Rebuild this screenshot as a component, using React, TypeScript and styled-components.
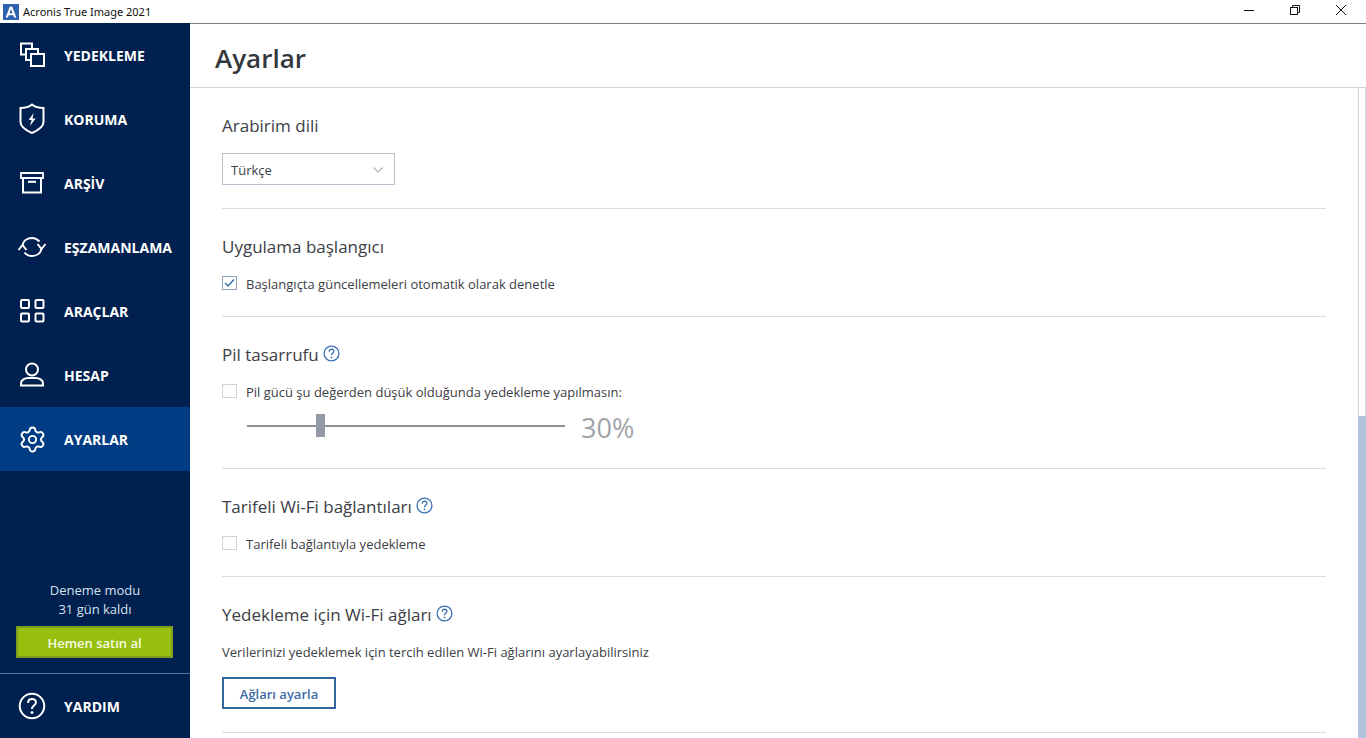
import React from 'react'
import styled, { createGlobalStyle } from 'styled-components'
import { Settings } from 'lucide-react'

const GlobalStyle = createGlobalStyle`
  html, body {
    margin: 0;
    height: 100%;
    overflow: hidden;
    background: #fff;
  }
  #root {
    height: 100%;
  }
  * {
    box-sizing: border-box;
  }
`

const Window = styled.div`
  display: flex;
  flex-direction: column;
  width: 1366px;
  height: 738px;
  overflow: hidden;
  font-family: 'Open Sans', 'Liberation Sans', sans-serif;
  color: #3b4046;
`

const TitleBar = styled.div`
  display: flex;
  align-items: center;
  flex: 0 0 23px;
  padding-left: 3px;
  background: #fff;
`

const AppName = styled.span`
  margin-left: 4px;
  font-family: 'Noto Sans', 'Open Sans', sans-serif;
  font-size: 11px;
  color: #111;
`

const WindowButtons = styled.div`
  display: flex;
  margin: 0 2px 0 auto;
`

const WindowButton = styled.div`
  display: flex;
  align-items: center;
  justify-content: center;
  width: 46px;
  height: 23px;
  margin-top: -3px;
  color: #111;
`

const Body = styled.div`
  display: flex;
  flex: 1;
  min-height: 0;
`

const Sidebar = styled.nav`
  display: flex;
  flex-direction: column;
  flex: 0 0 190px;
  background: #00204f;
`

const NavItem = styled.div<{ $active?: boolean }>`
  display: flex;
  align-items: center;
  gap: 16px;
  height: 64px;
  padding-left: 16px;
  background: ${(p) => (p.$active ? '#003c83' : 'transparent')};
  color: #fff;
  font-size: 14px;
  font-weight: 700;
`

const IconSlot = styled.span`
  display: flex;
  align-items: center;
  justify-content: center;
  flex: 0 0 32px;
  width: 32px;
  height: 32px;
`

const SidebarFooter = styled.div`
  display: flex;
  flex-direction: column;
  align-items: center;
  margin-top: auto;
`

const TrialText = styled.div`
  font-size: 13px;
  line-height: 19px;
  color: #d5e0ee;
  text-align: center;
`

const BuyButton = styled.button`
  align-self: flex-start;
  width: 157px;
  height: 32px;
  margin: 7px 0 0 16px;
  padding-top: 2px;
  border: 2px solid #7b9f1d;
  background: #97bf0d;
  color: #f6fbe6;
  font-family: inherit;
  font-size: 13px;
  font-weight: 600;
`

const HelpRow = styled(NavItem)`
  align-self: stretch;
  margin-top: 15px;
  border-top: 1px solid #4f74a6;
  height: 65px;
`

const Main = styled.main`
  display: flex;
  flex-direction: column;
  flex: 1;
  min-width: 0;
  border-top: 1px solid #808080;
`

const PageHeader = styled.header`
  display: flex;
  align-items: center;
  flex: 0 0 64px;
  padding: 4px 0 0 25px;
  border-bottom: 1px solid #c9d5df;
`

const PageTitle = styled.h1`
  margin: 0;
  font-size: 26px;
  font-weight: 600;
  color: #33383e;
`

const ScrollArea = styled.div`
  display: flex;
  flex: 1;
  min-height: 0;
`

const Content = styled.div`
  flex: 1;
  padding: 0 32px;
  overflow: hidden;
`

const Section = styled.section<{ $bottom: number }>`
  padding: 26px 0 ${(p) => p.$bottom}px;
  border-bottom: 1px solid #d9dee6;
`

const Heading = styled.h2`
  display: flex;
  align-items: center;
  gap: 4px;
  height: 24px;
  margin: 0;
  padding-bottom: 2px;
  font-size: 17px;
  font-weight: 400;
  color: #3b4046;
`

const HelpSlot = styled.span`
  display: flex;
  margin-top: -2px;
`

const Select = styled.div`
  display: flex;
  align-items: center;
  justify-content: space-between;
  width: 173px;
  height: 32px;
  margin-top: 15px;
  padding: 2px 10px 0 8px;
  border: 1px solid #b7c3d0;
  font-size: 13px;
  color: #3b4046;
`

const CheckRow = styled.label`
  display: flex;
  align-items: center;
  gap: 9px;
  height: 20px;
  margin-top: 15px;
  font-size: 13px;
  color: #3b4046;
`

const CheckBox = styled.span<{ $checked?: boolean }>`
  display: flex;
  align-items: center;
  justify-content: center;
  flex: 0 0 15px;
  width: 15px;
  height: 14px;
  margin-top: -2px;
  border: 1px solid ${(p) => (p.$checked ? '#8fa3bd' : '#ced3da')};
  background: #fff;
`

const SliderRow = styled.div`
  display: flex;
  align-items: center;
  height: 44px;
  margin-top: 2px;
  padding-left: 25px;
`

const SliderTrack = styled.div`
  position: relative;
  width: 318px;
  height: 2px;
  background: #8b9099;
`

const SliderThumb = styled.span`
  position: absolute;
  top: -11px;
  width: 9px;
  height: 23px;
  background: #9499a8;
`

const SliderValue = styled.span`
  margin: 2px 0 0 16px;
  font-size: 27px;
  font-weight: 400;
  color: #a0a4a9;
`

const Description = styled.p`
  display: flex;
  align-items: center;
  height: 20px;
  margin: 15px 0 0;
  font-size: 13px;
  color: #3b4046;
`

const OutlineButton = styled.button`
  display: block;
  width: 114px;
  height: 32px;
  margin-top: 15px;
  padding-top: 2px;
  border: 2px solid #33689f;
  background: #fff;
  color: #3d6ca6;
  font-family: inherit;
  font-size: 13px;
  font-weight: 600;
`

const ScrollTrack = styled.div`
  position: relative;
  flex: 0 0 8px;
  border-left: 1px solid #c6d2de;
  border-right: 1px solid #c6d2de;
`

const ScrollThumb = styled.div`
  position: absolute;
  top: 328px;
  bottom: 0;
  left: -1px;
  right: -1px;
  background: #b1c4de;
`

const navStroke = {
  fill: 'none',
  stroke: '#fff',
  strokeWidth: 2,
}

const LogoIcon = () => (
  <svg width="16" height="16" viewBox="0 0 16 16">
    <rect width="16" height="16" fill="#2d62ae" />
    <path d="M6.9 2.5h2.2L13.4 13.5h-2.3l-.8-2.3H5.7l-.8 2.3H2.6zM6.4 9.3h3.2L8 4.9z" fill="#fff" />
  </svg>
)

const BackupIcon = () => (
  <svg width="32" height="32" viewBox="0 0 32 32" {...navStroke}>
    <path d="M10 15.5H5V4.5H16V10" />
    <path d="M15 21H10V10H22V15" />
    <rect x="15" y="15" width="13" height="12" />
  </svg>
)

const ShieldIcon = () => (
  <svg width="32" height="32" viewBox="0 0 32 32" {...navStroke}>
    <path d="M16 1.5C19 4 23 5 27.5 5V19C27.5 24 21 27.8 16 30C11 27.8 4.5 24 4.5 19V5C9 5 13 4 16 1.5Z" />
    <path d="M17.6 10L12.6 17H15.6L14 23L19.6 15.5H16.5Z" fill="#fff" stroke="none" />
  </svg>
)

const ArchiveIcon = () => (
  <svg width="32" height="32" viewBox="0 0 32 32" {...navStroke}>
    <path d="M5 11V6H27V11Z" strokeWidth="1.8" />
    <path d="M7 11V25.5H25V11" />
    <path d="M12 14.8H20" />
  </svg>
)

const SyncIcon = () => (
  <svg width="32" height="32" viewBox="0 0 32 32" {...navStroke}>
    <path d="M6.5 15C7 9.5 11.5 7 16 7C19 7 21.5 8.3 23.5 10.5" />
    <path d="M2.5 19L6.5 14L10.5 19" />
    <path d="M25.5 17C25 22.5 20.5 25 16 25C13 25 10.5 24 8.5 21.5" />
    <path d="M21.5 13L25.5 18L29.5 13" />
  </svg>
)

const ToolsIcon = () => (
  <svg width="32" height="32" viewBox="0 0 32 32" {...navStroke}>
    <rect x="5" y="5" width="8" height="8" rx="1" />
    <rect x="19.5" y="5" width="8" height="8" rx="1" />
    <rect x="5" y="18.5" width="8" height="8" rx="1" />
    <rect x="19.5" y="18.5" width="8" height="8" rx="1" />
  </svg>
)

const UserIcon = () => (
  <svg width="32" height="32" viewBox="0 0 32 32" {...navStroke}>
    <circle cx="16" cy="10.5" r="6" />
    <path d="M5 26.5V24.5C5 21 9 19 12 19H20C23 19 27 21 27 24.5V26.5Z" />
  </svg>
)

const QuestionIcon = ({ size, color, weight }: { size: number; color: string; weight: number }) => (
  <svg width={size} height={size} viewBox="0 0 32 32" fill="none" stroke={color} strokeWidth={weight}>
    <circle cx="16" cy="16" r="14" />
    <path d="M11.5 12.5C11.5 9.5 13.5 8 16 8C18.7 8 20.5 9.7 20.5 12C20.5 15.2 16 15.2 16 19.5" />
    <circle cx="16" cy="23.5" r="1.2" fill={color} strokeWidth="1" />
  </svg>
)

const navItems = [
  { label: 'YEDEKLEME', icon: <BackupIcon /> },
  { label: 'KORUMA', icon: <ShieldIcon /> },
  { label: 'ARŞİV', icon: <ArchiveIcon /> },
  { label: 'EŞZAMANLAMA', icon: <SyncIcon /> },
  { label: 'ARAÇLAR', icon: <ToolsIcon /> },
  { label: 'HESAP', icon: <UserIcon /> },
  { label: 'AYARLAR', icon: <Settings size={29} strokeWidth={1.6} color="#fff" />, active: true },
]

const HelpMark = () => (
  <HelpSlot>
    <QuestionIcon size={17} color="#3b72b4" weight={2.4} />
  </HelpSlot>
)

const App = () => (
  <Window>
    <GlobalStyle />
    <TitleBar>
      <LogoIcon />
      <AppName>Acronis True Image 2021</AppName>
      <WindowButtons>
        <WindowButton>
          <svg width="10" height="10" viewBox="0 0 10 10" stroke="currentColor">
            <path d="M0 5.5H10" />
          </svg>
        </WindowButton>
        <WindowButton>
          <svg width="10" height="10" viewBox="0 0 10 10" fill="none" stroke="currentColor">
            <rect x="0.5" y="2.5" width="7" height="7" />
            <path d="M2.5 2.5V0.5H9.5V7.5H7.5" />
          </svg>
        </WindowButton>
        <WindowButton>
          <svg width="10" height="10" viewBox="0 0 10 10" stroke="currentColor">
            <path d="M0 0L10 10M10 0L0 10" />
          </svg>
        </WindowButton>
      </WindowButtons>
    </TitleBar>
    <Body>
      <Sidebar>
        {navItems.map((item) => (
          <NavItem key={item.label} $active={item.active}>
            <IconSlot>{item.icon}</IconSlot>
            {item.label}
          </NavItem>
        ))}
        <SidebarFooter>
          <TrialText>
            Deneme modu
            <br />
            31 gün kaldı
          </TrialText>
          <BuyButton>Hemen satın al</BuyButton>
          <HelpRow>
            <IconSlot>
              <QuestionIcon size={28} color="#fff" weight={2.3} />
            </IconSlot>
            YARDIM
          </HelpRow>
        </SidebarFooter>
      </Sidebar>
      <Main>
        <PageHeader>
          <PageTitle>Ayarlar</PageTitle>
        </PageHeader>
        <ScrollArea>
          <Content>
            <Section $bottom={23}>
              <Heading>Arabirim dili</Heading>
              <Select>
                Türkçe
                <svg width="12" height="12" viewBox="0 0 12 12" fill="none" stroke="#b5bcc4" strokeWidth="1.3">
                  <path d="M1.5 3.5L6 8L10.5 3.5" />
                </svg>
              </Select>
            </Section>
            <Section $bottom={22}>
              <Heading>Uygulama başlangıcı</Heading>
              <CheckRow>
                <CheckBox $checked>
                  <svg width="11" height="10" viewBox="0 0 11 10" fill="none" stroke="#3a6ea5" strokeWidth="1.5">
                    <path d="M1 5L4 8L10 1.5" />
                  </svg>
                </CheckBox>
                Başlangıçta güncellemeleri otomatik olarak denetle
              </CheckRow>
            </Section>
            <Section $bottom={20}>
              <Heading>
                Pil tasarrufu
                <HelpMark />
              </Heading>
              <CheckRow>
                <CheckBox />
                Pil gücü şu değerden düşük olduğunda yedekleme yapılmasın:
              </CheckRow>
              <SliderRow>
                <SliderTrack>
                  <SliderThumb style={{ left: `${Math.round(0.217 * 318)}px` }} />
                </SliderTrack>
                <SliderValue>30%</SliderValue>
              </SliderRow>
            </Section>
            <Section $bottom={22}>
              <Heading>
                Tarifeli Wi-Fi bağlantıları
                <HelpMark />
              </Heading>
              <CheckRow>
                <CheckBox />
                Tarifeli bağlantıyla yedekleme
              </CheckRow>
            </Section>
            <Section $bottom={23}>
              <Heading>
                Yedekleme için Wi-Fi ağları
                <HelpMark />
              </Heading>
              <Description>Verilerinizi yedeklemek için tercih edilen Wi-Fi ağlarını ayarlayabilirsiniz</Description>
              <OutlineButton>Ağları ayarla</OutlineButton>
            </Section>
          </Content>
          <ScrollTrack>
            <ScrollThumb />
          </ScrollTrack>
        </ScrollArea>
      </Main>
    </Body>
  </Window>
)

export default App
